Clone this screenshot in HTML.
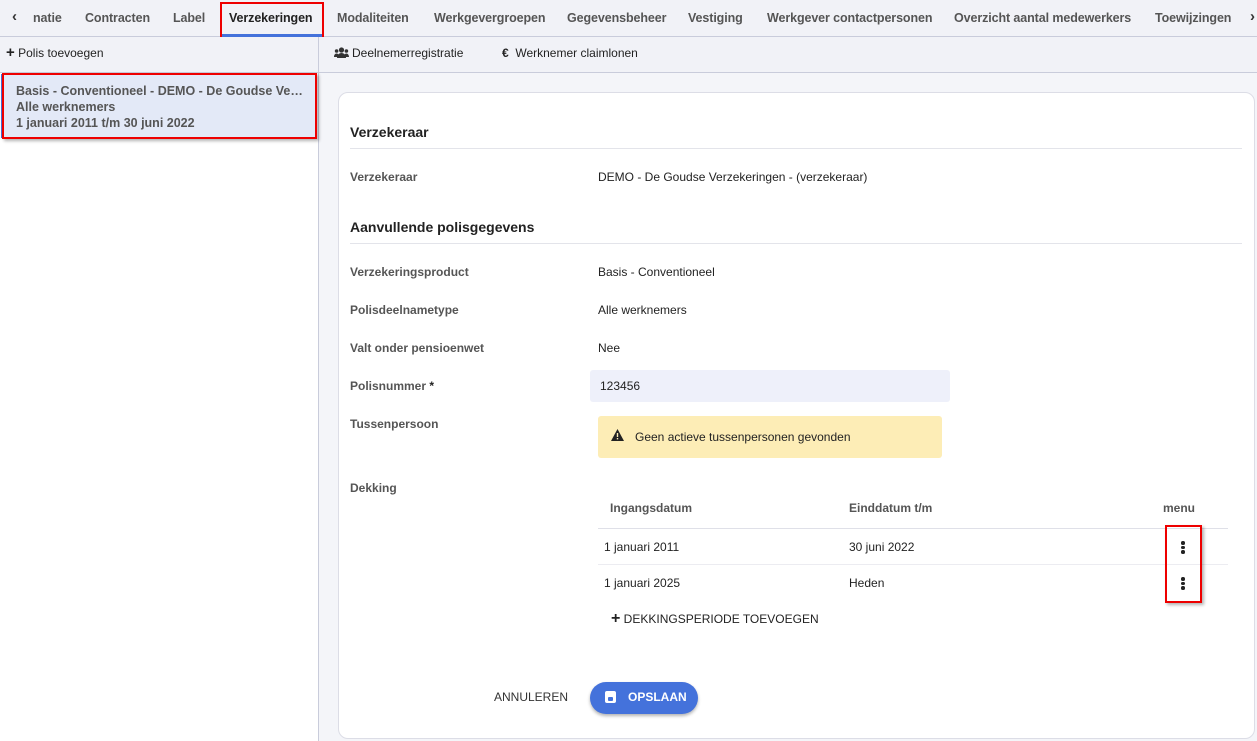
<!DOCTYPE html>
<html><head><style>
*{margin:0;padding:0;box-sizing:border-box}
body{width:1257px;height:741px;overflow:hidden;font-family:"Liberation Sans",sans-serif;background:#f4f5f9;position:relative;color:#222}
.a{position:absolute;white-space:nowrap}
.tab{position:absolute;top:11px;font-size:12.5px;color:#555;font-weight:bold;letter-spacing:-0.1px}
.lbl{position:absolute;left:350px;font-size:12px;color:#555;font-weight:bold}
.val{position:absolute;left:598px;font-size:12px;color:#222}
.red{position:absolute;border:2px solid #e00;box-shadow:2px 2px 3px rgba(0,0,0,.3)}
</style></head><body>
<div class="a" style="left:0;top:0;width:1257px;height:37px;background:#f1f2f7;border-bottom:1px solid #c9ccdb"></div>
<div class="tab" style="left:12px;color:#333;font-size:15px;top:8px">&#8249;</div>
<div class="tab" style="left:33px">natie</div>
<div class="tab" style="left:85px">Contracten</div>
<div class="tab" style="left:173px">Label</div>
<div class="tab" style="left:229px;color:#222">Verzekeringen</div>
<div class="a" style="left:221px;top:34px;width:102px;height:3px;background:#4472db"></div>
<div class="tab" style="left:337px">Modaliteiten</div>
<div class="tab" style="left:434px">Werkgevergroepen</div>
<div class="tab" style="left:567px">Gegevensbeheer</div>
<div class="tab" style="left:688px">Vestiging</div>
<div class="tab" style="left:767px">Werkgever contactpersonen</div>
<div class="tab" style="left:954px">Overzicht aantal medewerkers</div>
<div class="tab" style="left:1155px">Toewijzingen</div>
<div class="tab" style="left:1250px;color:#333;font-size:15px;top:8px">&#8250;</div>
<div class="red" style="left:220px;top:2px;width:104px;height:38px;box-shadow:none"></div>

<div class="a" style="left:0;top:37px;width:1257px;height:36px;background:#f1f2f7;border-bottom:1px solid #c9ccdb"></div>
<div class="a" style="left:6px;top:46px;font-size:12px;color:#222"><b style="font-size:15px;line-height:12px">+</b> Polis toevoegen</div>
<svg class="a" style="left:334px;top:47px" width="15" height="11" viewBox="0 0 15 11"><circle cx="7.5" cy="3" r="2.6" fill="#333"/><circle cx="2.6" cy="4" r="1.8" fill="#333"/><circle cx="12.4" cy="4" r="1.8" fill="#333"/><path d="M3 11c0-3 2-5 4.5-5s4.5 2 4.5 5z" fill="#333"/><path d="M0 10c0-2 1-3.5 2.6-3.5S5 8 5 10z M10 10c0-2 1-3.5 2.4-3.5S15 8 15 10z" fill="#333"/></svg>
<div class="a" style="left:352px;top:46px;font-size:12px;color:#222">Deelnemerregistratie</div>
<div class="a" style="left:502px;top:46px;font-size:12px;color:#222"><b>€</b>&nbsp; Werknemer claimlonen</div>

<div class="a" style="left:0;top:73px;width:319px;height:668px;background:#fff;border-right:1px solid #c9ccdb"></div>
<div class="a" style="left:318px;top:37px;width:1px;height:36px;background:#c9ccdb"></div>
<div class="a" style="left:1px;top:74px;width:315px;height:64px;background:#e3e9f7;border-left:3px solid #4472db"></div>
<div class="a" style="left:16px;top:83px;width:287px;overflow:hidden;text-overflow:ellipsis;font-size:12.5px;color:#555;font-weight:bold;line-height:16px">Basis - Conventioneel - DEMO - De Goudse Verzekeringen</div>
<div class="a" style="left:16px;top:99px;font-size:12.5px;color:#555;font-weight:bold;line-height:16px">Alle werknemers<br>1 januari 2011 t/m 30 juni 2022</div>
<div class="red" style="left:2px;top:73px;width:315px;height:66px"></div>

<div class="a" style="left:338px;top:92px;width:917px;height:647px;background:#fff;border:1px solid #dcdde6;border-radius:10px"></div>
<div class="a" style="left:350px;top:124px;font-size:14px;color:#222;font-weight:bold">Verzekeraar</div>
<div class="a" style="left:350px;top:148px;width:892px;height:1px;background:#e3e4ea"></div>
<div class="lbl" style="top:170px">Verzekeraar</div><div class="val" style="top:170px">DEMO - De Goudse Verzekeringen - (verzekeraar)</div>
<div class="a" style="left:350px;top:219px;font-size:14px;color:#222;font-weight:bold">Aanvullende polisgegevens</div>
<div class="a" style="left:350px;top:243px;width:892px;height:1px;background:#e3e4ea"></div>
<div class="lbl" style="top:265px">Verzekeringsproduct</div><div class="val" style="top:265px">Basis - Conventioneel</div>
<div class="lbl" style="top:303px">Polisdeelnametype</div><div class="val" style="top:303px">Alle werknemers</div>
<div class="lbl" style="top:341px">Valt onder pensioenwet</div><div class="val" style="top:341px">Nee</div>
<div class="lbl" style="top:379px">Polisnummer <b style="color:#222">*</b></div>
<div class="a" style="left:590px;top:370px;width:360px;height:32px;background:#eef0fa;border-radius:3px"></div>
<div class="a" style="left:600px;top:379px;font-size:12px">123456</div>
<div class="lbl" style="top:417px">Tussenpersoon</div>
<div class="a" style="left:598px;top:416px;width:344px;height:42px;background:#fdedb6;border-radius:3px"></div>
<svg class="a" style="left:611px;top:429px" width="13" height="12" viewBox="0 0 13 12"><path d="M6.5 0L13 12H0z" fill="#222"/><rect x="5.8" y="4" width="1.4" height="4" fill="#fdedb6"/><rect x="5.8" y="9" width="1.4" height="1.4" fill="#fdedb6"/></svg>
<div class="a" style="left:635px;top:430px;font-size:12px">Geen actieve tussenpersonen gevonden</div>
<div class="lbl" style="top:481px">Dekking</div>
<div class="a" style="left:610px;top:501px;font-size:12px;color:#555;font-weight:bold">Ingangsdatum</div>
<div class="a" style="left:849px;top:501px;font-size:12px;color:#555;font-weight:bold">Einddatum t/m</div>
<div class="a" style="left:1163px;top:501px;font-size:12px;color:#555;font-weight:bold">menu</div>
<div class="a" style="left:598px;top:528px;width:630px;height:1px;background:#dfe0e8"></div>
<div class="a" style="left:598px;top:564px;width:630px;height:1px;background:#ececf1"></div>
<div class="a" style="left:604px;top:540px;font-size:12px">1 januari 2011</div>
<div class="a" style="left:849px;top:540px;font-size:12px">30 juni 2022</div>
<div class="a" style="left:604px;top:576px;font-size:12px">1 januari 2025</div>
<div class="a" style="left:849px;top:576px;font-size:12px">Heden</div>
<div class="a" style="left:1181px;top:541px;width:4px;font-size:0"><div style="width:3.5px;height:3.5px;background:#222;border-radius:50%;margin-bottom:1px"></div><div style="width:3.5px;height:3.5px;background:#222;border-radius:50%;margin-bottom:1px"></div><div style="width:3.5px;height:3.5px;background:#222;border-radius:50%"></div></div>
<div class="a" style="left:1181px;top:577px;width:4px;font-size:0"><div style="width:3.5px;height:3.5px;background:#222;border-radius:50%;margin-bottom:1px"></div><div style="width:3.5px;height:3.5px;background:#222;border-radius:50%;margin-bottom:1px"></div><div style="width:3.5px;height:3.5px;background:#222;border-radius:50%"></div></div>
<div class="red" style="left:1165px;top:525px;width:37px;height:78px"></div>
<div class="a" style="left:611px;top:612px;font-size:12px;color:#222"><b style="font-size:16px;line-height:12px">+</b> DEKKINGSPERIODE TOEVOEGEN</div>
<div class="a" style="left:494px;top:690px;font-size:12px;color:#333">ANNULEREN</div>
<div class="a" style="left:590px;top:682px;width:108px;height:32px;background:#4472db;border-radius:16px;box-shadow:0 2px 3px rgba(0,0,0,.3)"></div>
<div class="a" style="left:605px;top:691px;width:11px;height:12px;background:#fff;border-radius:2px"><div style="position:absolute;left:3px;top:6px;width:5px;height:4px;background:#4472db;border-radius:1px"></div></div>
<div class="a" style="left:628px;top:690px;font-size:12px;color:#fff;font-weight:bold">OPSLAAN</div>
</body></html>
